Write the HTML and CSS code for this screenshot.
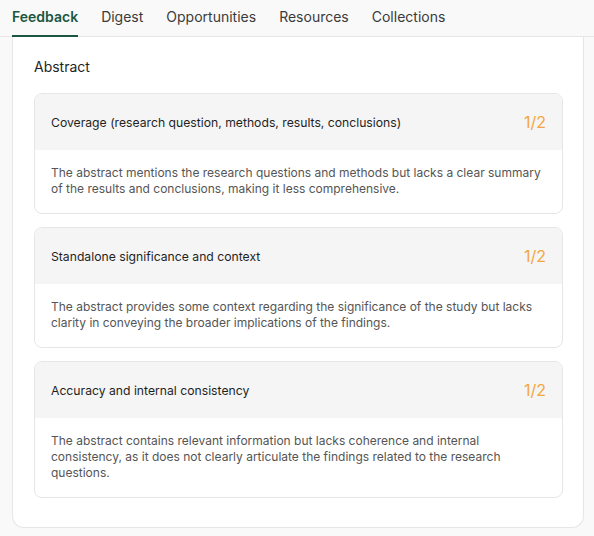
FILE: index.html
```html
<!DOCTYPE html>
<html lang="en">
<head>
    <meta charset="UTF-8">
    <meta name="viewport" content="width=device-width, initial-scale=1.0">
    <title>Feedback</title>
    <link rel="stylesheet" href="styles.css">
</head>
<body>
    <nav class="tabs">
        <a class="tab active">Feedback</a>
        <a class="tab">Digest</a>
        <a class="tab">Opportunities</a>
        <a class="tab">Resources</a>
        <a class="tab">Collections</a>
    </nav>

    <div class="panel">
        <h2 class="section-title">Abstract</h2>

        <div class="card">
            <div class="card-head">
                <span class="criterion">Coverage (research question, methods, results, conclusions)</span>
                <span class="score">1/2</span>
            </div>
            <div class="card-body">
                The abstract mentions the research questions and methods but lacks a clear summary of the results and conclusions, making it less comprehensive.
            </div>
        </div>

        <div class="card">
            <div class="card-head">
                <span class="criterion">Standalone significance and context</span>
                <span class="score">1/2</span>
            </div>
            <div class="card-body">
                The abstract provides some context regarding the significance of the study but lacks clarity in conveying the broader implications of the findings.
            </div>
        </div>

        <div class="card">
            <div class="card-head">
                <span class="criterion">Accuracy and internal consistency</span>
                <span class="score">1/2</span>
            </div>
            <div class="card-body">
                The abstract contains relevant information but lacks coherence and internal consistency, as it does not clearly articulate the findings related to the research questions.
            </div>
        </div>
    </div>
</body>
</html>
```

FILE: styles.css
```css
body {
    font-family: Inter, "Noto Sans", sans-serif;
    margin: 0;
    padding: 0 10px 9px 12px;
    background: #f9f9f9;
    color: #1f1f1f;
}

.tabs {
    display: flex;
    gap: 23px;
    height: 36px;
    border-bottom: 1px solid #e6e6e6;
    margin: 0 -10px 0 -12px;
    padding-left: 12px;
}

.tab {
    font-size: 14px;
    color: #3b3b3b;
    padding-top: 8px;
    border-bottom: 2px solid transparent;
    margin-bottom: -1px;
}

.tab.active {
    color: #1b5640;
    font-weight: 600;
    border-bottom-color: #1b5640;
}

.panel {
    background: white;
    border: 1px solid #e6e6e6;
    border-top: none;
    border-radius: 0 0 12px 12px;
    padding: 20px 20px 29px 21px;
}

.section-title {
    font-size: 14px;
    font-weight: 400;
    margin: 0 0 16px;
    line-height: 20px;
}

.card {
    border: 1px solid #e6e6e6;
    border-radius: 8px;
    overflow: hidden;
    margin-bottom: 13px;
}

.card:last-child {
    margin-bottom: 0;
}

.card-head {
    display: flex;
    justify-content: space-between;
    align-items: center;
    background: #f4f5f4;
    height: 56px;
    padding: 0 16px;
}

.criterion {
    font-size: 12.2px;
    font-weight: 400;
    color: #1f1f1f;
}

.score {
    font-size: 16px;
    color: #f4a63e;
}

.card-body {
    font-size: 12px;
    line-height: 16px;
    color: #555;
    padding: 15px 16px 16px;
}
```
